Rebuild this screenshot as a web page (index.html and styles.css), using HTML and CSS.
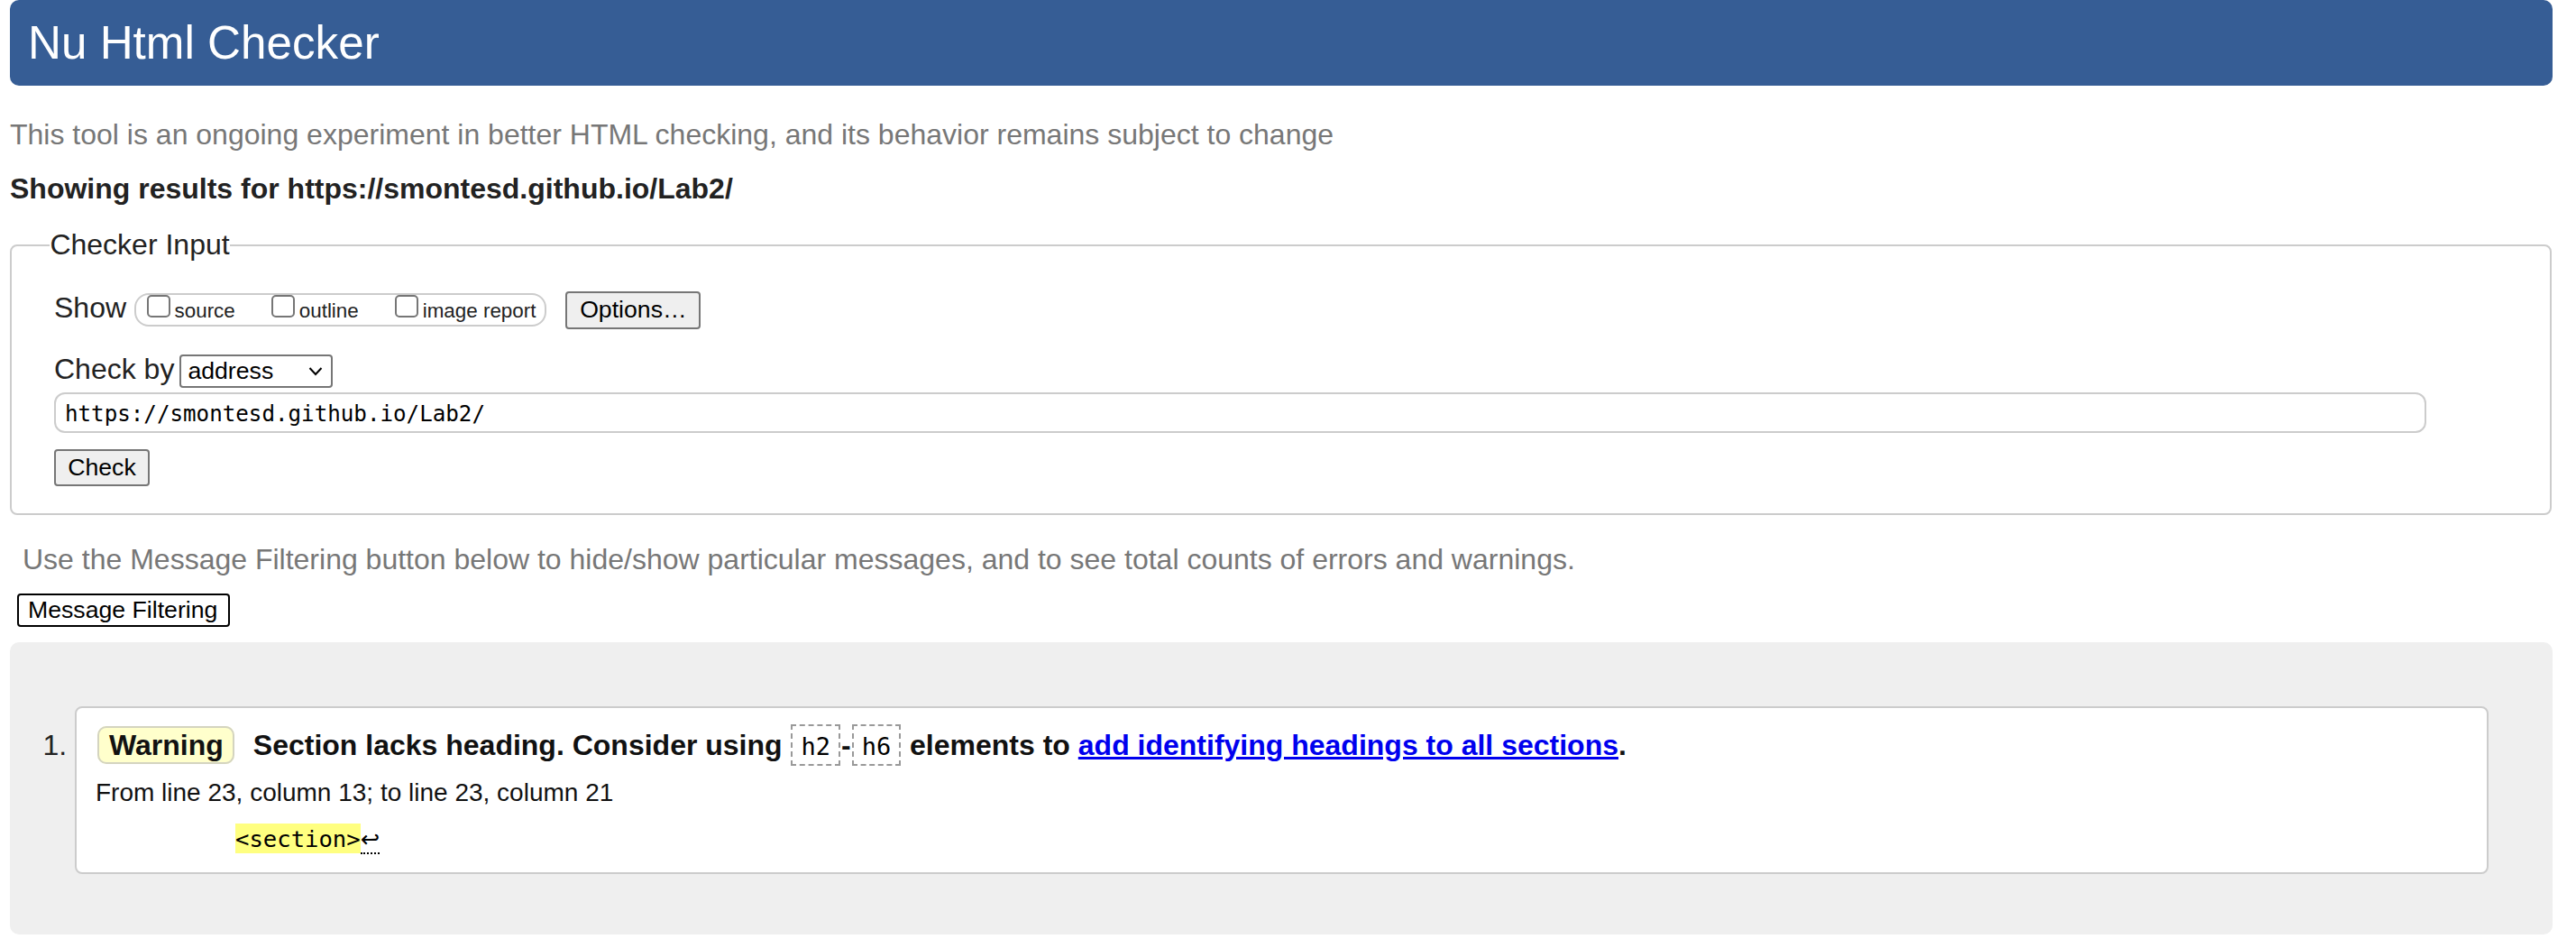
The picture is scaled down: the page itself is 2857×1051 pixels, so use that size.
FILE: index.html
```html
<!DOCTYPE html>
<html lang="en">
<head>
<meta charset="utf-8">
<title>Showing results for https://smontesd.github.io/Lab2/ - Nu Html Checker</title>
<link rel="stylesheet" href="styles.css">
</head>
<body>
<h1 class="title">Nu Html Checker</h1>
<p class="intro">This tool is an ongoing experiment in better HTML checking, and its behavior remains subject to change</p>
<p class="results-for">Showing results for https://smontesd.github.io/Lab2/</p>
<form class="checker-form">
  <fieldset class="checker">
    <legend class="checker-legend">Checker Input</legend>
    <div class="row row-show">
      <span class="row-label">Show</span>
      <div class="show-box">
        <label class="opt"><input type="checkbox" class="cb"><span>source</span></label>
        <label class="opt"><input type="checkbox" class="cb"><span>outline</span></label>
        <label class="opt opt-last"><input type="checkbox" class="cb"><span>image report</span></label>
      </div>
      <button type="button" class="btn btn-options">Options…</button>
    </div>
    <div class="row row-checkby">
      <label class="row-label row-label-by" for="docselect">Check by</label>
      <span class="select-wrap">
        <select id="docselect" class="select"><option>address</option></select>
        <svg class="chev" viewBox="0 0 16 12" aria-hidden="true"><polyline points="1.5,2 8,9 14.5,2" fill="none" stroke="#000" stroke-width="2"/></svg>
      </span>
    </div>
    <input class="url" type="text" value="https://smontesd.github.io/Lab2/">
    <div class="row-submit"><button type="button" class="btn btn-check">Check</button></div>
  </fieldset>
</form>
<p class="filter-note">Use the Message Filtering button below to hide/show particular messages, and to see total counts of errors and warnings.</p>
<button type="button" class="filter-btn">Message Filtering</button>
<div class="results">
  <ol class="msgs">
    <li class="msg-item">
      <span class="msg-num">1.</span>
      <div class="msg-card">
        <p class="msg-text"><strong class="badge">Warning</strong><span>Section lacks heading. Consider using <code class="tag">h2</code>-<code class="tag">h6</code> elements to <a href="#" class="msg-link">add identifying headings to all sections</a>.</span></p>
        <p class="location">From line 23, column 13; to line 23, column 21</p>
        <p class="extract"><code class="extract-code"><mark class="hl">&lt;section&gt;</mark><span class="lf">↩</span></code></p>
      </div>
    </li>
  </ol>
</div>
</body>
</html>
```
FILE: styles.css
```css
html, body {
  margin: 0;
  padding: 0;
}

body {
  font-family: "Liberation Sans", Arial, sans-serif;
  font-size: 32px;
  line-height: normal;
  color: #222;
  background: #fff;
}

.title {
  margin: 0 26px 0 11px;
  padding: 18px 20px;
  font-size: 51.2px;
  font-weight: normal;
  line-height: normal;
  color: #fff;
  background: #365d95;
  border-radius: 10px;
}

.intro {
  margin: 36px 0 0 11px;
  color: #777;
}

.results-for {
  margin: 23px 0 0 11px;
  font-weight: bold;
  color: #222;
}

.checker-form {
  margin: 25px 27px 0 11px;
}

.checker {
  margin: 0;
  min-width: 0;
  border: 2px solid #ccc;
  border-radius: 8px;
  padding: 32.6px 20px 30px 42.4px;
}

.checker-legend {
  padding: 0;
  font-size: 32px;
  line-height: normal;
  color: #222;
}

.row {
  display: flex;
  align-items: center;
  margin-left: 4.6px;
}

.row-show {
  height: 42px;
}

.row-label {
  margin-right: 8.5px;
  margin-bottom: 4px;
  line-height: normal;
  color: #222;
}

.show-box {
  display: flex;
  align-items: baseline;
  box-sizing: border-box;
  height: 37px;
  border: 2px solid #ccc;
  border-radius: 16px;
  padding: 0 10px 0 12px;
  margin-right: 21px;
  font-size: 22.4px;
  color: #222;
}

.opt {
  display: flex;
  align-items: baseline;
  margin-right: 40px;
}

.opt-last {
  margin-right: 0;
}

.cb {
  -webkit-appearance: none;
  appearance: none;
  box-sizing: border-box;
  width: 26px;
  height: 25px;
  margin: 0 5px 0 0;
  border: 2px solid #767676;
  border-radius: 5px;
  background: #fff;
}

.btn {
  box-sizing: border-box;
  font-family: "Liberation Sans", Arial, sans-serif;
  font-size: 26.67px;
  line-height: normal;
  color: #000;
  background: #efefef;
  border: 2px solid #767676;
  border-radius: 4px;
  padding: 0 13.7px;
  margin: 0;
}

.btn-options {
  height: 42px;
}

.row-checkby {
  margin-top: 28px;
  height: 37px;
}

.row-label-by {
  margin-right: 6px;
  margin-bottom: 3px;
}

.select-wrap {
  position: relative;
  display: inline-flex;
}

.select {
  -webkit-appearance: none;
  appearance: none;
  box-sizing: border-box;
  width: 170px;
  height: 37px;
  margin: 0;
  padding: 0 0 0 7px;
  border: 2px solid #767676;
  border-radius: 4px;
  background: #fff;
  font-family: "Liberation Sans", Arial, sans-serif;
  font-size: 26.67px;
  color: #000;
}

.chev {
  position: absolute;
  left: 143px;
  top: 13px;
  width: 16px;
  height: 12px;
  pointer-events: none;
}

.url {
  display: block;
  box-sizing: border-box;
  width: 2631px;
  height: 45px;
  margin: 5px 0 0 4.6px;
  padding: 4px 10px 0;
  border: 2px solid #ccc;
  border-radius: 12px;
  font-family: "DejaVu Sans Mono", monospace;
  font-size: 24.2px;
  color: #000;
  background: #fff;
}

.row-submit {
  display: flex;
  margin: 18px 0 0 4.6px;
}

.btn-check {
  height: 41px;
  padding: 0 13.2px;
}

.filter-note {
  margin: 31.5px 0 0 25px;
  color: #777;
}

.filter-btn {
  display: block;
  box-sizing: border-box;
  height: 37px;
  margin: 18.7px 0 0 19px;
  padding: 0 12px 0 10px;
  border: 2px solid #000;
  border-radius: 4px;
  background: #fff;
  font-family: "Liberation Sans", Arial, sans-serif;
  font-size: 26.67px;
  line-height: normal;
  color: #000;
}

.results {
  margin: 17px 26px 0 11px;
  padding: 71px 71px 67px 36.5px;
  background: #efefef;
  border-radius: 10px;
}

.msgs {
  margin: 0;
  padding: 0;
  list-style: none;
}

.msg-item {
  display: flex;
  align-items: baseline;
}

.msg-num {
  flex: none;
  width: 35.5px;
  font-size: 32px;
  color: #222;
}

.msg-card {
  flex: 1;
  min-width: 0;
  background: #fff;
  border: 2px solid #ccc;
  border-radius: 8px;
  padding: 23px 20px 22px 21px;
}

.msg-text {
  margin: 0;
  font-weight: bold;
  color: #111;
}

.badge {
  margin: 0 21px 0 2px;
  padding: 1.1px 10px 1.1px 11px;
  background: #ffffcc;
  border: 2px solid #d4d4c0;
  border-radius: 10px;
}

.tag {
  margin: 0 1px;
  padding: 7px 9px 4px;
  font-family: "DejaVu Sans Mono", monospace;
  font-size: 27px;
  font-weight: normal;
  color: #000;
  border: 2px dashed #999;
}

.msg-link {
  color: #0000ee;
  text-decoration: underline;
}

.location {
  margin: 18.4px 0 0;
  font-size: 28px;
  color: #111;
}

.extract {
  margin: 19.8px 0 0;
  padding-left: 155px;
  font-family: "DejaVu Sans Mono", monospace;
  font-size: 25.6px;
  line-height: normal;
  color: #000;
}

.extract-code {
  font-family: inherit;
  font-size: inherit;
}

.hl {
  padding: 2px 0 1px;
  background: #ffff80;
  color: #000;
}

.lf {
  font-family: "DejaVu Sans", sans-serif;
  border-bottom: 2px dotted #000;
}
```
